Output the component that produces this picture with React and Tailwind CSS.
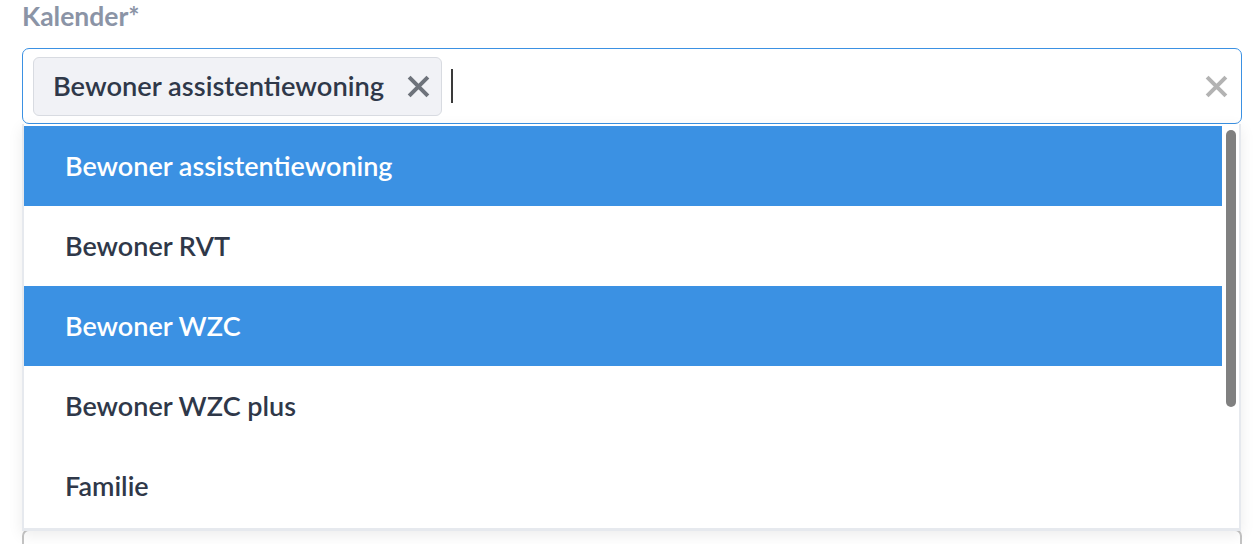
import React from "react";

const options = [
  { label: "Bewoner assistentiewoning", selected: true },
  { label: "Bewoner RVT", selected: false },
  { label: "Bewoner WZC", selected: true },
  { label: "Bewoner WZC plus", selected: false },
  { label: "Familie", selected: false },
];

const Cross = ({ className }) => (
  <svg viewBox="0 0 20 20" className={className} fill="none" stroke="currentColor" strokeWidth="3.2" strokeLinecap="butt">
    <path d="M2.5 2.5 L17.5 17.5 M17.5 2.5 L2.5 17.5" />
  </svg>
);

const App = () => {
  return (
    <div className="w-[1256px] h-[544px] overflow-hidden bg-white font-['Lato','Noto_Sans',sans-serif]">
      <div className="pl-[22px] pr-[14px]">
        <div className="pt-[1px] h-[48px] text-[26.5px] leading-[30px] font-bold text-[#8b94a6]">Kalender*</div>

        <div className="relative">
          <div className="h-[76px] border-[1.5px] border-[#3b91e3] rounded-[7px] flex items-center pl-[10px] pr-[12px]">
            <div className="h-[59px] flex items-center bg-[#f1f2f6] border-[1.5px] border-[#d8dbe1] rounded-[6px] pl-[19px] pr-[10px]">
              <span className="text-[27.3px] font-semibold text-[#2f3849]">Bewoner assistentiewoning</span>
              <Cross className="w-[25px] h-[25px] ml-[22px] text-[#6e737b]" />
            </div>
            <div className="w-[2px] h-[34px] bg-[#3a3a3a] ml-[9px]" />
            <div className="flex-1" />
            <Cross className="w-[25px] h-[25px] text-[#b3b3b3]" />
          </div>

          <div className="absolute left-0 top-[76px] w-[1219px] h-[407px] bg-white border-x-2 border-b-[3px] border-[#e6e9ee] shadow-[0_4px_14px_rgba(0,0,0,0.08)] z-10 flex">
            <div className="flex-1 flex flex-col pt-[2px]">
              {options.map((o) => (
                <div
                  key={o.label}
                  className={
                    o.selected
                      ? "h-[80px] shrink-0 flex items-center pl-[41px] bg-[#3b91e3] text-white text-[27px] font-semibold"
                      : "h-[80px] shrink-0 flex items-center pl-[41px] text-[#2f3849] text-[27px] font-semibold"
                  }
                >
                  {o.label}
                </div>
              ))}
            </div>
            <div className="w-[17px] pt-[6px] pl-[4px]">
              <div className="w-[10px] h-[277px] rounded-full bg-[#808080]" />
            </div>
          </div>
        </div>

        <div className="mt-[405px] h-[40px] border-2 border-[#c4c4c4] rounded-[7px]" />
      </div>
    </div>
  );
};

export default App;
